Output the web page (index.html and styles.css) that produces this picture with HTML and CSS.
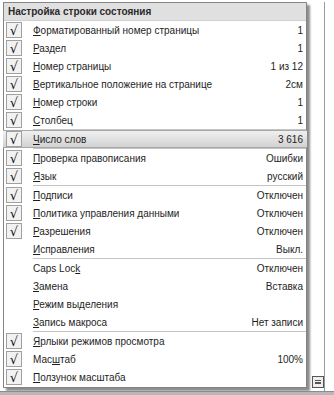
FILE: index.html
```html
<!DOCTYPE html>
<html lang="ru">
<head>
    <meta charset="UTF-8">
    <title>Настройка строки состояния</title>
    <link rel="stylesheet" href="styles.css">
</head>
<body>
    <div class="window">
        <div class="area">
            <div class="menu">
                <div class="menu-title">Настройка строки состояния</div>

                <div class="item"><span class="check on">√</span><span class="label"><u>Ф</u>орматированный номер страницы</span><span class="value">1</span></div>
                <div class="item"><span class="check on">√</span><span class="label"><u>Р</u>аздел</span><span class="value">1</span></div>
                <div class="item"><span class="check on">√</span><span class="label"><u>Н</u>омер страницы</span><span class="value">1 из 12</span></div>
                <div class="item"><span class="check on">√</span><span class="label"><u>В</u>ертикальное положение на странице</span><span class="value">2см</span></div>
                <div class="item"><span class="check on">√</span><span class="label"><u>Н</u>омер строки</span><span class="value">1</span></div>
                <div class="item"><span class="check on">√</span><span class="label"><u>С</u>толбец</span><span class="value">1</span></div>
                <div class="sep"></div>
                <div class="item active"><span class="check on">√</span><span class="label"><u>Ч</u>исло слов</span><span class="value">3 616</span></div>
                <div class="sep"></div>
                <div class="item"><span class="check on">√</span><span class="label"><u>П</u>роверка правописания</span><span class="value">Ошибки</span></div>
                <div class="item"><span class="check on">√</span><span class="label"><u>Я</u>зык</span><span class="value">русский</span></div>
                <div class="sep"></div>
                <div class="item"><span class="check on">√</span><span class="label"><u>П</u>одписи</span><span class="value">Отключен</span></div>
                <div class="item"><span class="check on">√</span><span class="label"><u>П</u>олитика управления данными</span><span class="value">Отключен</span></div>
                <div class="item"><span class="check on">√</span><span class="label"><u>Р</u>азрешения</span><span class="value">Отключен</span></div>
                <div class="item"><span class="check"></span><span class="label"><u>И</u>справления</span><span class="value">Выкл.</span></div>
                <div class="sep"></div>
                <div class="item"><span class="check"></span><span class="label">Caps Loc<u>k</u></span><span class="value">Отключен</span></div>
                <div class="item"><span class="check"></span><span class="label"><u>З</u>амена</span><span class="value">Вставка</span></div>
                <div class="item"><span class="check"></span><span class="label"><u>Р</u>ежим выделения</span><span class="value"></span></div>
                <div class="item"><span class="check"></span><span class="label"><u>З</u>апись макроса</span><span class="value">Нет записи</span></div>
                <div class="sep"></div>
                <div class="item"><span class="check on">√</span><span class="label"><u>Я</u>рлыки режимов просмотра</span><span class="value"></span></div>
                <div class="item"><span class="check on">√</span><span class="label">Мас<u>ш</u>таб</span><span class="value">100%</span></div>
                <div class="item"><span class="check on">√</span><span class="label"><u>П</u>олзунок масштаба</span><span class="value"></span></div>
            </div>
            <div class="side">
                <span class="zoom-btn"></span>
            </div>
        </div>
        <div class="status-edge"></div>
    </div>
</body>
</html>
```

FILE: styles.css
```css
body {
    margin: 0;
    background-color: #fff;
    font-family: 'Liberation Sans', Arial, sans-serif;
    font-size: 10px;
    color: #1e1e1e;
}

.window {
    width: 334px;
    height: 395px;
    display: flex;
    flex-direction: column;
}

.area {
    display: flex;
    flex: 1;
    padding: 2px 0 0 3px;
}

.menu {
    width: 303px;
    border: 1px solid #858585;
    background-color: #fff;
    box-shadow: 3px 3px 2px rgba(0, 0, 0, 0.45);
    align-self: flex-start;
    padding-bottom: 1px;
}

.menu-title {
    height: 18px;
    line-height: 18px;
    padding-left: 4px;
    font-weight: bold;
    color: #2a2a2a;
    background-color: #e0e0e0;
    border-bottom: 1px solid #d0d0d0;
    box-sizing: border-box;
}

.item {
    display: flex;
    align-items: center;
    height: 18px;
    padding-right: 3px;
    white-space: nowrap;
}

.item u {
    text-decoration-thickness: 1px;
    text-underline-offset: 1px;
}

.item.active {
    background: linear-gradient(#f0f0f0, #d2d2d2);
    border-top: 1px solid #a8a8a8;
    border-bottom: 1px solid #a8a8a8;
    height: 16px;
    margin-left: -1px;
    margin-right: -1px;
    padding-left: 1px;
    padding-right: 4px;
}

.check {
    width: 16px;
    height: 16px;
    margin: 0 11px 0 2px;
    box-sizing: border-box;
    display: flex;
    align-items: center;
    justify-content: center;
    font-family: 'DejaVu Sans', sans-serif;
    font-size: 13px;
    line-height: 1;
    color: #111;
}

.check.on {
    border: 1px solid #a0a0a0;
    background-color: #f2f2f2;
}

.label {
    flex: 1;
}

.value {
    text-align: right;
}

.sep {
    height: 1px;
    margin-left: 29px;
    background-color: #c4c4c4;
}

.side {
    flex: 1;
    display: flex;
    flex-direction: column;
    justify-content: flex-end;
    align-items: flex-start;
    padding: 0 0 3px 5px;
    border-right: 1px solid #9a9a9a;
    margin-right: 9px;
}

.zoom-btn {
    width: 10px;
    height: 10px;
    border: 1px solid #555;
    background: linear-gradient(#555, #555) center / 6px 1px no-repeat,
                linear-gradient(#555, #555) center 3px / 6px 1px no-repeat,
                linear-gradient(#555, #555) center 6px / 6px 1px no-repeat,
                #eee;
}

.status-edge {
    height: 3px;
    background-color: #b8b8b8;
    border-top: 1px solid #8c8c8c;
}
```
